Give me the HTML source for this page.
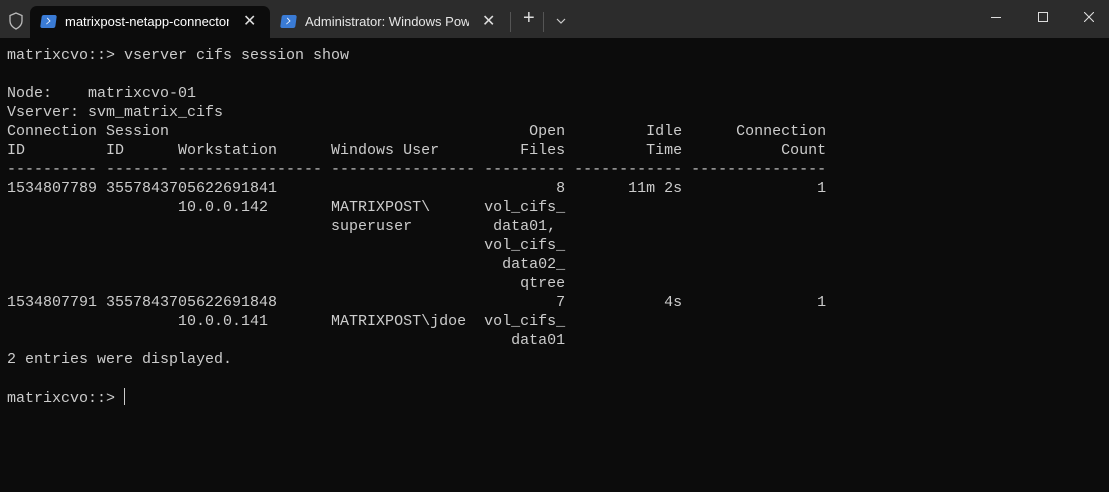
<!DOCTYPE html>
<html><head><meta charset="utf-8"><style>
html,body{margin:0;padding:0;width:1109px;height:492px;background:#0c0c0c;overflow:hidden;font-family:"Liberation Sans",sans-serif}
.bar{position:absolute;left:0;top:0;width:1109px;height:38px;background:#2c2c2c}
.tab{position:absolute;top:6px;height:32px;border-radius:7px 7px 0 0;color:#fff;font-size:13px}
.t1{left:30px;width:240px;background:#0c0c0c}
.t2{left:270px;width:240px;color:#e6e6e6}
.ps{position:absolute;left:11px;top:9px;width:15px;height:13px;background:#3a7bd5;border-radius:2px;transform:skewX(-8deg)}
.ps:after{content:"";position:absolute;left:3px;top:3px;width:5px;height:5px;border-right:1.5px solid #fff;border-bottom:1.5px solid #fff;transform:rotate(-45deg) scale(.8)}
.lbl{position:absolute;left:35px;top:8px;white-space:nowrap;overflow:hidden;width:164px}
.x{position:absolute;top:5px;font-size:16px;color:#ddd}
pre{position:absolute;left:7px;top:46px;margin:0;font-family:"Liberation Mono",monospace;font-size:15px;line-height:19px;color:#cccccc}
.cur{display:inline-block;width:1px;height:17px;background:#ccc;vertical-align:-3px}
</style></head><body>
<div class="bar">
<svg style="position:absolute;left:8px;top:12px" width="16" height="18" viewBox="0 0 16 18"><path d="M8 1 L14 3.5 V9 C14 13 11 15.5 8 17 C5 15.5 2 13 2 9 V3.5 Z" fill="none" stroke="#bbb" stroke-width="1.3"/></svg>
<div class="tab t1"><div class="ps"></div><div class="lbl">matrixpost-netapp-connector</div><div class="x" style="left:213px">✕</div></div>
<div class="tab t2"><div class="ps"></div><div class="lbl">Administrator: Windows PowerShell</div><div class="x" style="left:212px">✕</div></div>
<div style="position:absolute;left:510px;top:12px;width:1px;height:20px;background:#555"></div>
<div style="position:absolute;left:523px;top:7px;color:#ddd;font-size:20px">+</div>
<div style="position:absolute;left:543px;top:12px;width:1px;height:20px;background:#555"></div>
<svg style="position:absolute;left:556px;top:18px" width="10" height="6"><path d="M1 1 L5 5 L9 1" fill="none" stroke="#ccc" stroke-width="1.2"/></svg>
<div style="position:absolute;left:991px;top:17px;width:10px;height:1px;background:#ddd"></div>
<div style="position:absolute;left:1038px;top:12px;width:8px;height:8px;border:1px solid #ddd"></div>
<svg style="position:absolute;left:1084px;top:12px" width="10" height="10"><path d="M0 0 L10 10 M10 0 L0 10" stroke="#ddd" stroke-width="1.1"/></svg>
</div>
<pre>matrixcvo::&gt; vserver cifs session show

Node:    matrixcvo-01
Vserver: svm_matrix_cifs
Connection Session                                        Open         Idle      Connection
ID         ID      Workstation      Windows User         Files         Time           Count
---------- ------- ---------------- ---------------- --------- ------------ ---------------
1534807789 3557843705622691841                               8       11m 2s               1
                   10.0.0.142       MATRIXPOST\      vol_cifs_
                                    superuser         data01,
                                                     vol_cifs_
                                                       data02_
                                                         qtree
1534807791 3557843705622691848                               7           4s               1
                   10.0.0.141       MATRIXPOST\jdoe  vol_cifs_
                                                        data01
2 entries were displayed.

matrixcvo::&gt; <span class="cur"></span></pre>
</body></html>
